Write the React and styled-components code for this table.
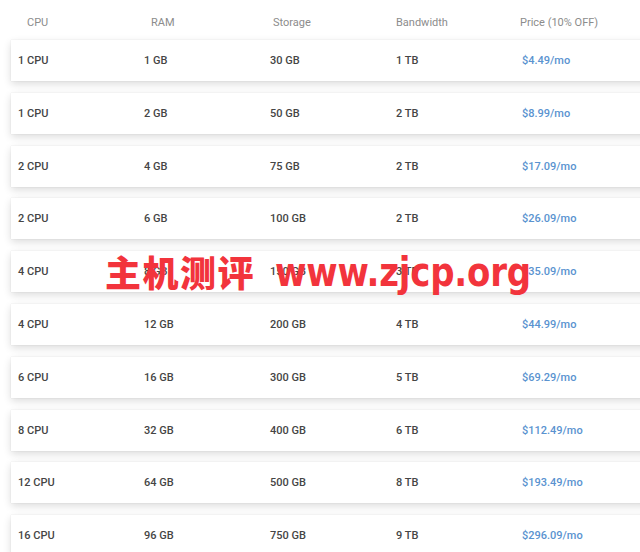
import React from 'react';
import styled, { createGlobalStyle } from 'styled-components';

const GlobalStyle = createGlobalStyle`
  html, body {
    margin: 0;
    padding: 0;
    background: #ffffff;
    overflow: hidden;
  }
  body {
    font-family: Roboto, "Liberation Sans", Arial, sans-serif;
  }
`;

const plans = [
  { cpu: '1 CPU', ram: '1 GB', storage: '30 GB', bw: '1 TB', price: '$4.49/mo' },
  { cpu: '1 CPU', ram: '2 GB', storage: '50 GB', bw: '2 TB', price: '$8.99/mo' },
  { cpu: '2 CPU', ram: '4 GB', storage: '75 GB', bw: '2 TB', price: '$17.09/mo' },
  { cpu: '2 CPU', ram: '6 GB', storage: '100 GB', bw: '2 TB', price: '$26.09/mo' },
  { cpu: '4 CPU', ram: '8 GB', storage: '150 GB', bw: '3 TB', price: '$35.09/mo' },
  { cpu: '4 CPU', ram: '12 GB', storage: '200 GB', bw: '4 TB', price: '$44.99/mo' },
  { cpu: '6 CPU', ram: '16 GB', storage: '300 GB', bw: '5 TB', price: '$69.29/mo' },
  { cpu: '8 CPU', ram: '32 GB', storage: '400 GB', bw: '6 TB', price: '$112.49/mo' },
  { cpu: '12 CPU', ram: '64 GB', storage: '500 GB', bw: '8 TB', price: '$193.49/mo' },
  { cpu: '16 CPU', ram: '96 GB', storage: '750 GB', bw: '9 TB', price: '$296.09/mo' },
];

/* 래퍼 */

const Page = styled.main`
  position: relative;
  width: 640px;
  height: 552px;
  overflow: hidden;
  padding-left: 11px;
  box-sizing: border-box;
`;

/* 헤더 */

const HeaderRow = styled.div`
  display: grid;
  grid-template-columns: 124px 122px 123px 124px 140px;
  padding-left: 16px;
  padding-top: 4px;
  height: 40px;
  align-items: center;
  box-sizing: border-box;
`;

const HeaderCell = styled.span`
  font-size: 11px;
  font-weight: 400;
  color: #8c8c8c;
  white-space: nowrap;
`;

/* 행 */

const List = styled.div`
  display: flex;
  flex-direction: column;
  gap: 11.8px;
`;

const PlanCard = styled.div`
  display: grid;
  grid-template-columns: repeat(5, 126px);
  align-items: center;
  width: 650px;
  height: 41px;
  padding-left: 7px;
  box-sizing: border-box;
  background: #ffffff;
  box-shadow: 0 0 1px rgba(0, 0, 0, 0.12), 0 3px 8px rgba(0, 0, 0, 0.14);
`;

const Cell = styled.span`
  font-size: 11px;
  font-weight: 500;
  color: ${({ $price }) => ($price ? '#5a93d0' : '#454545')};
  white-space: nowrap;
`;

/* 워터마크 */

const Watermark = styled.div`
  position: absolute;
  left: 105px;
  top: 253px;
  display: flex;
  align-items: baseline;
  gap: 20px;
  color: #f2343c;
  pointer-events: none;
`;

const MarkCn = styled.span`
  font-family: "Noto Sans CJK SC", sans-serif;
  font-size: 36px;
  font-weight: 900;
  letter-spacing: 1.5px;
  line-height: 1;
`;

const MarkUrl = styled.span`
  font-family: "DejaVu Sans", sans-serif;
  font-size: 34px;
  font-weight: 700;
  line-height: 1;
  letter-spacing: -0.2px;
  transform: scaleY(1.18);
  transform-origin: bottom;
`;

export default function App() {
  return (
    <Page>
      <GlobalStyle />
      <HeaderRow>
        <HeaderCell>CPU</HeaderCell>
        <HeaderCell>RAM</HeaderCell>
        <HeaderCell>Storage</HeaderCell>
        <HeaderCell>Bandwidth</HeaderCell>
        <HeaderCell>Price (10% OFF)</HeaderCell>
      </HeaderRow>
      <List>
        {plans.map((p, i) => (
          <PlanCard key={i}>
            <Cell>{p.cpu}</Cell>
            <Cell>{p.ram}</Cell>
            <Cell>{p.storage}</Cell>
            <Cell>{p.bw}</Cell>
            <Cell $price>{p.price}</Cell>
          </PlanCard>
        ))}
      </List>
      <Watermark>
        <MarkCn>主机测评</MarkCn>
        <MarkUrl>www.zjcp.org</MarkUrl>
      </Watermark>
    </Page>
  );
}
